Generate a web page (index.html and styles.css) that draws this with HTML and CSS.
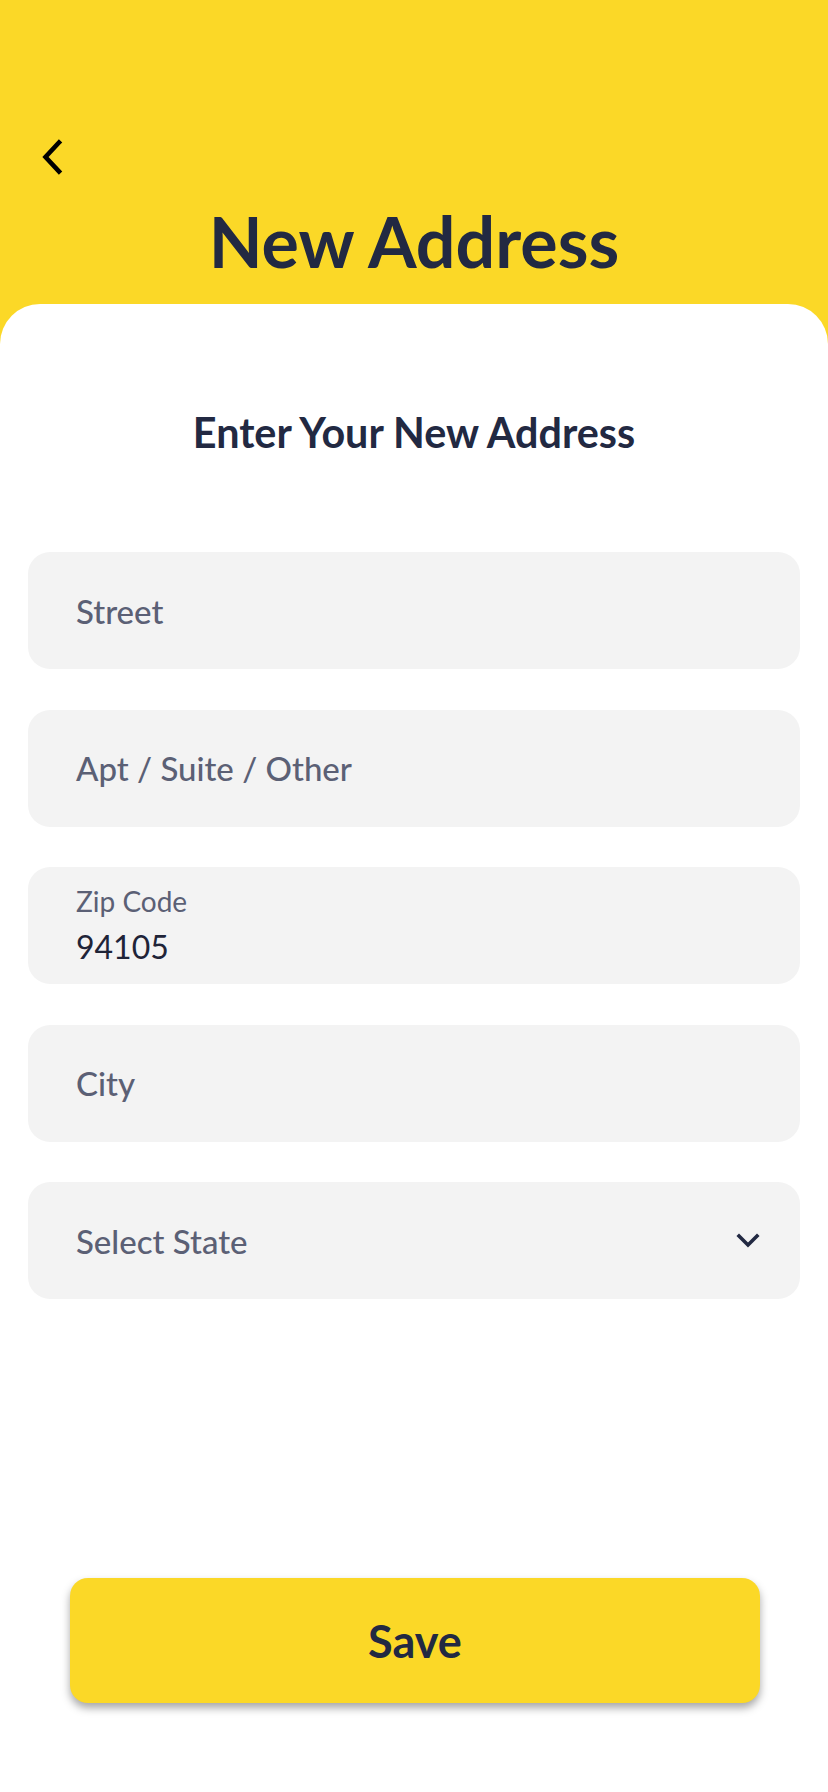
FILE: index.html
```html
<!DOCTYPE html>
<html>
<head>
<meta charset="utf-8">
<link rel="stylesheet" href="styles.css">
</head>
<body>
<div class="page">
  <header class="header">
    <svg class="back" width="24" height="38" viewBox="0 0 24 38">
      <path d="M19 4.5 L5.5 19 L19 33.5" fill="none" stroke="#000" stroke-width="4.6" stroke-linecap="square" stroke-linejoin="miter"/>
    </svg>
    <h1 class="title">New Address</h1>
  </header>
  <main class="card">
    <h2 class="subtitle">Enter Your New Address</h2>
    <div class="fields">
      <div class="field"><span class="placeholder">Street</span></div>
      <div class="field"><span class="placeholder">Apt / Suite / Other</span></div>
      <div class="field filled"><span class="label">Zip Code</span><span class="value">94105</span></div>
      <div class="field"><span class="placeholder">City</span></div>
      <div class="field select"><span class="placeholder">Select State</span>
        <svg class="caret" width="24" height="16" viewBox="0 0 24 16"><path d="M3 3 L12 12 L21 3" fill="none" stroke="#222942" stroke-width="3.6" stroke-linecap="square" stroke-linejoin="miter"/></svg>
      </div>
    </div>
    <div class="actions">
      <button class="save">Save</button>
    </div>
  </main>
</div>
</body>
</html>
```
FILE: styles.css
```css
* { box-sizing: border-box; }
html, body { margin: 0; padding: 0; }
body {
  width: 828px;
  height: 1792px;
  background: #FBD827;
  font-family: "Lato", "Noto Sans", sans-serif;
  color: #222942;
  overflow: hidden;
}
.page {
  display: flex;
  flex-direction: column;
  height: 1792px;
}
.header {
  height: 304px;
  padding-top: 138px;
  display: flex;
  flex-direction: column;
}
.back {
  display: block;
  margin-left: 40px;
}
.title {
  margin: 30px 0 0;
  font-size: 70px;
  line-height: 70px;
  font-weight: 700;
  text-align: center;
  color: #222942;
}
.card {
  flex: 1;
  background: #fff;
  border-radius: 40px 40px 0 0;
  padding: 108px 28px 0;
  display: flex;
  flex-direction: column;
}
.subtitle {
  margin: 0;
  font-size: 41.3px;
  line-height: 41px;
  font-weight: 700;
  text-align: center;
}
.fields {
  margin-top: 99px;
  display: flex;
  flex-direction: column;
  gap: 40.5px;
}
.field {
  height: 117px;
  background: #F3F3F3;
  border-radius: 22px;
  padding: 0 48px;
  display: flex;
  align-items: center;
}
.placeholder {
  font-size: 33px;
  font-weight: 500;
  color: #5B6075;
}
.field.filled {
  flex-direction: column;
  align-items: flex-start;
  justify-content: center;
  gap: 11px;
}
.label {
  font-size: 28px;
  line-height: 32px;
  color: #5B6075;
}
.value {
  font-size: 32px;
  line-height: 38px;
  color: #1F2438;
}
.field.select {
  justify-content: space-between;
  padding-right: 40px;
}
.caret { display: block; }
.actions {
  margin-top: auto;
  padding: 0 40px 89px 42px;
}
.save {
  display: block;
  width: 100%;
  height: 125px;
  border: none;
  border-radius: 18px;
  background: #FBD827;
  box-shadow: 0 5px 8px rgba(0,0,0,0.35);
  font-family: "Lato", "Noto Sans", sans-serif;
  font-size: 45px;
  font-weight: 700;
  color: #222942;
}
```
